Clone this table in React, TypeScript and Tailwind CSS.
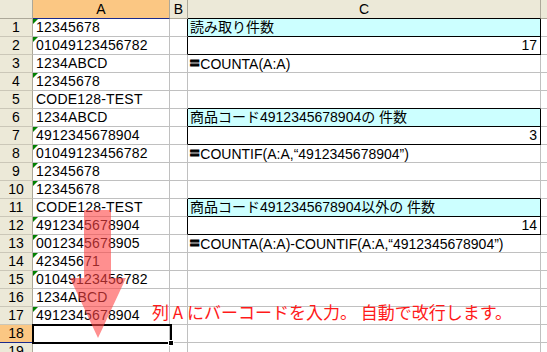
import React from "react";

type CCell = {
  text?: string;
  formula?: string;
  box?: boolean;
  cyan?: boolean;
  right?: boolean;
};

const colA: [string, boolean][] = [
  ["12345678", true],
  ["01049123456782", true],
  ["1234ABCD", false],
  ["12345678", true],
  ["CODE128-TEST", false],
  ["1234ABCD", false],
  ["4912345678904", true],
  ["01049123456782", true],
  ["12345678", true],
  ["12345678", true],
  ["CODE128-TEST", false],
  ["4912345678904", true],
  ["0012345678905", true],
  ["42345671", true],
  ["01049123456782", true],
  ["1234ABCD", false],
  ["4912345678904", true],
  ["", false],
  ["", false],
];

const colC: Record<number, CCell> = {
  1: { text: "読み取り件数", box: true, cyan: true },
  2: { text: "17", box: true, right: true },
  3: { formula: "COUNTA(A:A)" },
  6: { text: "商品コード4912345678904の 件数", box: true, cyan: true },
  7: { text: "3", box: true, right: true },
  8: { formula: "COUNTIF(A:A,“4912345678904”)" },
  11: { text: "商品コード4912345678904以外の 件数", box: true, cyan: true },
  12: { text: "14", box: true, right: true },
  13: { formula: "COUNTA(A:A)-COUNTIF(A:A,“4912345678904”)" },
};

// rows whose C cell bottom edge is the top of a box
const boxTop = [5, 10];

const Row = ({ n, a, green }: { n: number; a: string; green: boolean }) => {
  const c = colC[n] || {};
  const selected = n === 18;
  return (
    <div className="flex h-[18px]">
      <div
        className={
          "w-[33px] shrink-0 border-r border-r-[#aca899] text-center leading-[17px] text-black " +
          (selected
            ? "bg-[#fbc783] border-b border-b-[#1b2a8c]"
            : "bg-[#ece9d8] border-b border-b-[#cbc7b8]")
        }
      >
        {n}
      </div>
      <div className="relative w-[137px] shrink-0 border-r border-b border-[#c0c0c0] pl-[3px] leading-[17px] whitespace-nowrap tracking-[0.2px]">
        {green && (
          <span className="absolute left-0 top-0 h-0 w-0 border-t-[5px] border-r-[5px] border-t-[#008000] border-r-transparent" />
        )}
        {a}
      </div>
      <div
        className={
          "w-[18px] shrink-0 border-r border-b border-b-[#c0c0c0] " +
          (c.box ? "border-r-black" : "border-r-[#c0c0c0]")
        }
      />
      <div
        className={
          "w-[353px] shrink-0 border-r border-b px-[2px] leading-[17px] whitespace-nowrap " +
          (c.box ? "border-black " : "border-[#c0c0c0] ") +
          (boxTop.includes(n) ? "border-b-black " : "") +
          (c.cyan ? "bg-[#ccffff] " : "") +
          (c.right ? "text-right pr-[3px]" : "")
        }
      >
        {c.formula ? (
          <>
            <span className="mr-[1px] text-[16px] font-bold [-webkit-text-stroke:1.2px_black]">=</span>
            {c.formula}
          </>
        ) : (
          c.text
        )}
      </div>
      <div className="flex-1 border-b border-[#c0c0c0]" />
    </div>
  );
};

export default function App() {
  return (
    <div className="relative h-[352px] w-[547px] overflow-hidden bg-white font-['Liberation_Sans','Noto_Sans_CJK_JP',sans-serif] text-[14px] text-black">
      {/* column headers */}
      <div className="flex h-[19px] bg-[#ece9d8] leading-[18px]">
        <div className="w-[33px] shrink-0 border-r border-b border-[#aca899]" />
        <div className="w-[137px] shrink-0 border-r border-r-[#aca899] border-b border-b-[#1b2a8c] bg-[#fbc783] text-center">
          A
        </div>
        <div className="w-[18px] shrink-0 border-r border-b border-[#aca899] text-center">B</div>
        <div className="w-[353px] shrink-0 border-r border-r-[#aca899] border-b border-b-black text-center">
          C
        </div>
        <div className="flex-1 border-b border-[#aca899]" />
      </div>

      {colA.map(([a, g], i) => (
        <Row key={i} n={i + 1} a={a} green={g} />
      ))}

      {/* active cell A18 */}
      <div className="absolute left-[32px] top-[324px] h-[20px] w-[140px] border-2 border-black">
        <span className="absolute -bottom-[4px] -right-[4px] h-[6px] w-[6px] border border-white bg-black" />
      </div>

      {/* arrow */}
      <svg className="pointer-events-none absolute left-0 top-0" width="547" height="352">
        <polygon
          points="84,210 111,210 111,278 126,278 98,338 70,278 84,278"
          fill="#ff4444"
          fillOpacity="0.6"
        />
      </svg>

      {/* note */}
      <div className="absolute left-[152px] top-[302px] whitespace-nowrap font-['Noto_Sans_CJK_JP',sans-serif] text-[17px] leading-[20px] text-[#ff1a1a]">
        列 A にバーコードを入力。 自動で改行します。
      </div>
    </div>
  );
}
